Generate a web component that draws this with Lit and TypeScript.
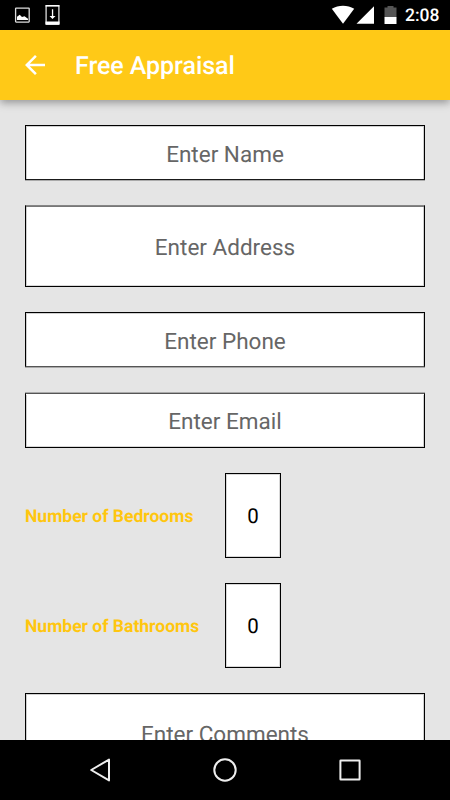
import { LitElement, html, css, svg } from "lit";
import { customElement, property } from "lit/decorators.js";

@customElement("status-bar")
class StatusBar extends LitElement {
  static styles = css`
    :host { display: flex; height: 30px; background: #000; align-items: stretch; }
    .left { width: 70px; }
    .right { margin-left: auto; width: 70px; }
    .clock { width: 45px; color: #fff; font: 500 17.5px/33px Roboto, sans-serif; padding-left: 5px; text-rendering: geometricPrecision; }
    svg { display: block; }
  `;
  render() {
    return html`
      <svg class="left" width="70" height="30" viewBox="0 0 70 30">
        <rect x="15.6" y="8.1" width="13.6" height="14" rx=".5" fill="none" stroke="#ddd" stroke-width="1.3" />
        <path d="M17 20v-3.2l2.7-2 2.3 2.2 2.5-.7 3.5 2.4V20z" fill="#fff" />
        <rect x="46.1" y="5.6" width="12.8" height="18.6" rx=".5" fill="none" stroke="#ddd" stroke-width="1.3" />
        <path d="M45.5 21.5h14v3.3h-14zM45.5 5h14v1.5h-14z" fill="#fff" />
        <path d="M51.9 9.3h1.3V16h2.3l-3 3-3-3h2.4z" fill="#fff" />
      </svg>
      <svg class="right" width="70" height="30" viewBox="0 0 70 30">
        <path d="M1.8 8.7C8.6 4.6 17.4 4.6 24.2 8.7L13 23.7z" fill="#fff" />
        <path d="M26.5 23.7 44 6.2v17.5z" fill="#fff" />
        <path d="M54.5 7.5h3V6h6v1.5h3v9.7h-12z" fill="#555" />
        <path d="M54.5 17h12v7h-12z" fill="#fff" />
      </svg>
      <div class="clock">2:08</div>
    `;
  }
}

@customElement("app-bar")
class AppBar extends LitElement {
  static styles = css`
    :host { display: flex; position: relative; z-index: 1; height: 70px; align-items: center; background: #ffc917;
      box-shadow: 0 3px 8px rgba(0, 0, 0, 0.34); }
    .back { display: block; width: 20px; height: 20px; margin-left: 25px; }
    .title { margin-left: 30px; color: #fff; font: 500 25px/30px Roboto, sans-serif; letter-spacing: -0.05px; white-space: nowrap; padding-top: 4px; text-rendering: geometricPrecision; }
  `;
  render() {
    return html`
      <svg class="back" viewBox="0 0 20 20">
        <path d="M20 8.75H4.8l7-7L10 0 0 10l10 10 1.8-1.75-7-7H20z" fill="#fff" />
      </svg>
      <div class="title">Free Appraisal</div>
    `;
  }
}

@customElement("text-field")
class TextField extends LitElement {
  @property() label = "";
  static styles = css`
    :host { display: flex; box-sizing: border-box; align-items: center; justify-content: center; background: #fff;
      border: 1px solid #000; border-top-color: var(--top, #000); border-bottom-color: var(--bottom, #000);
      box-shadow: 0 1px var(--bottom-outer, transparent), 0 -1px var(--top-outer, transparent),
        inset 0 1px var(--top-inner, #d0d0d0), inset 1px 0 #d0d0d0, inset -1px 0 #d0d0d0, inset 0 -1px var(--bottom-inner, #d8d8d8); }
    .hint { font: 400 22.5px/26px Roboto, sans-serif; color: #666; padding-top: var(--hint-shift, 4px); text-rendering: geometricPrecision; }
  `;
  render() {
    return html`<span class="hint">${this.label}</span>`;
  }
}

@customElement("count-row")
class CountRow extends LitElement {
  @property() label = "";
  @property() value = "0";
  static styles = css`
    :host { display: flex; align-items: center; height: 85px; }
    .label { width: 200px; color: #ffc60f; font: 700 17.5px/22px Roboto, sans-serif; padding-top: 2px; text-rendering: geometricPrecision; }
    .box { box-sizing: border-box; width: 56px; height: 85px; background: #fff; border: 1px solid #000;
      box-shadow: inset 0 0 0 1px #d8d8d8; display: flex; align-items: center; justify-content: center;
      font: 400 20.5px/24px Roboto, sans-serif; color: #000; padding-top: 3px; text-rendering: geometricPrecision; }
  `;
  render() {
    return html`<div class="label">${this.label}</div><div class="box">${this.value}</div>`;
  }
}

@customElement("nav-bar")
class NavBar extends LitElement {
  static styles = css`
    :host { display: flex; height: 60px; background: #000; align-items: center; justify-content: center; gap: 101px; }
    svg { display: block; width: 24px; height: 24px; fill: none; stroke: #eee; stroke-width: 2; stroke-linejoin: round; }
  `;
  render() {
    const shapes = [
      svg`<path d="M3.2 12 21 1.6v20.8z" />`,
      svg`<circle cx="12" cy="12" r="10.7" />`,
      svg`<rect x="2.4" y="2.4" width="19.2" height="19.2" rx=".4" />`,
    ];
    return shapes.map((s) => html`<svg viewBox="0 0 24 24">${s}</svg>`);
  }
}

@customElement("app-root")
class AppRoot extends LitElement {
  static styles = css`
    :host { display: flex; flex-direction: column; width: 450px; height: 800px; overflow: hidden; background: #e5e5e5; }
    status-bar, app-bar, nav-bar { flex: none; }
    .form { flex: 1; min-height: 0; overflow: hidden; padding: 25px 25px 0; }
    .name { height: 55px; margin-bottom: 25px; --bottom: #1a1a1a; --bottom-outer: #aaa; --bottom-inner: #fff; }
    .address { height: 82px; margin-bottom: 25px; --top: #858585; --top-inner: #777; }
    .phone { height: 55px; margin-bottom: 26px; --bottom: #555; --bottom-outer: #aaa; --bottom-inner: #fff; }
    .email { height: 55px; margin-bottom: 25px; --top: #555; --top-outer: #aaa; --top-inner: #fff; --hint-shift: 2px; }
    count-row { margin-bottom: 25px; }
    .comments { height: 82px; --hint-shift: 2px; }
  `;
  render() {
    return html`
      <status-bar></status-bar>
      <app-bar></app-bar>
      <div class="form">
        <text-field class="name" label="Enter Name"></text-field>
        <text-field class="address" label="Enter Address"></text-field>
        <text-field class="phone" label="Enter Phone"></text-field>
        <text-field class="email" label="Enter Email"></text-field>
        <count-row label="Number of Bedrooms"></count-row>
        <count-row label="Number of Bathrooms"></count-row>
        <text-field class="comments" label="Enter Comments"></text-field>
      </div>
      <nav-bar></nav-bar>
    `;
  }
}
